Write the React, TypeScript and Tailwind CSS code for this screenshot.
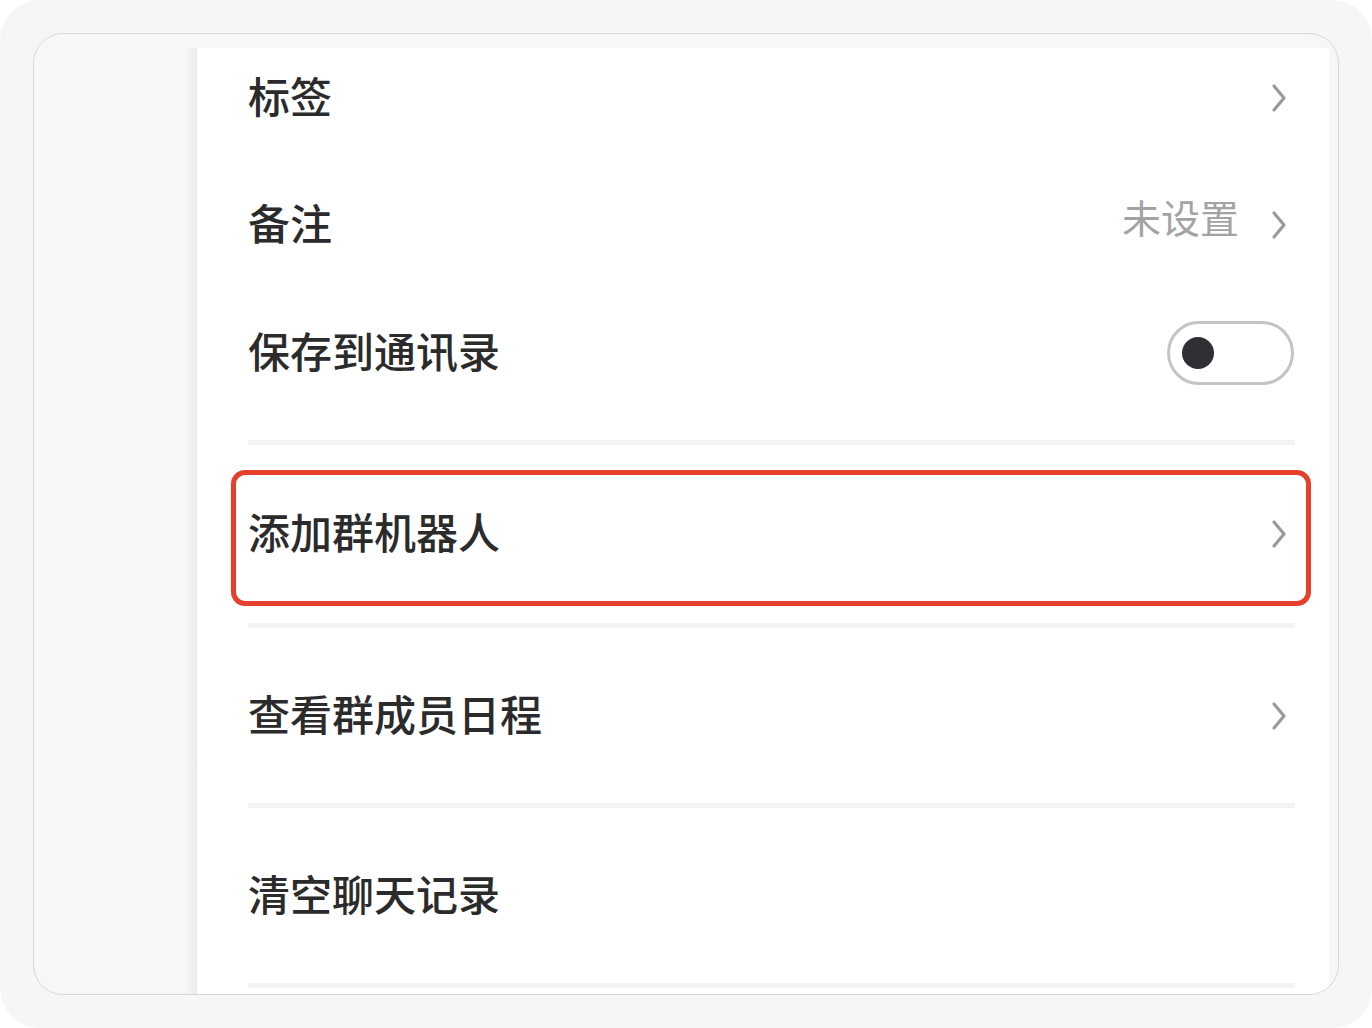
import React from "react";

const font = { fontFamily: '"Noto Sans CJK SC", "Noto Sans", sans-serif' };

function Chevron({ className = "" }: { className?: string }) {
  return (
    <svg width="20" height="32" viewBox="0 0 20 32" className={className} fill="none">
      <path d="M5 4 L15 16 L5 28" stroke="#9a9a9a" strokeWidth="3.2" strokeLinecap="round" strokeLinejoin="round" />
    </svg>
  );
}

function Divider() {
  return <div className="h-[5px] w-full bg-[#f2f3f4]" />;
}

export default function App() {
  return (
    <div className="w-[1372px] h-[1028px] bg-white" style={font}>
      <div className="w-full h-full rounded-[40px] bg-[#f5f6f8] p-[33px]">
        <div className="w-full h-full rounded-[30px] border border-[#d6d7d9] bg-[#f6f7f9] overflow-hidden flex">
          <div className="w-[150px] shrink-0" />
          <div className="w-[13px] shrink-0 mt-[14px] bg-gradient-to-r from-[#f6f7f9] to-[#e9eaec]" />
          <div className="flex-1 mt-[14px] mr-[9px] bg-white pl-[51px] pr-[34px] text-[42px] font-medium leading-none text-[#2b2b2b] flex flex-col">
            <div className="h-[100px] flex items-center justify-between">
              <span className="mb-[6px]">标签</span>
              <Chevron className="mr-[6px]" />
            </div>
            <div className="h-[154px] flex items-center justify-between">
              <span className="mb-[6px]">备注</span>
              <div className="flex items-center">
                <span className="text-[39px] font-normal text-[#a3a3a3] mb-[18px] mr-[30px]">未设置</span>
                <Chevron className="mr-[6px]" />
              </div>
            </div>
            <div className="h-[102px] flex items-center justify-between">
              <span className="mb-[6px]">保存到通讯录</span>
              <div className="w-[127px] h-[64px] mr-[1px] rounded-full border-[3px] border-[#c4c4c4] flex items-center pl-[12px]">
                <div className="w-[32px] h-[32px] rounded-full bg-[#2f3033]" />
              </div>
            </div>
            <div className="h-[36px]" />
            <Divider />
            <div className="h-[178px] relative flex items-center justify-between">
              <span className="mb-[6px]">添加群机器人</span>
              <Chevron className="mr-[6px]" />
              <div className="absolute left-[-17px] right-[-16px] top-[25px] h-[136px] rounded-[14px] border-[5px] border-[#e4402b]" />
            </div>
            <Divider />
            <div className="h-[175px] flex items-center justify-between">
              <span className="mb-[6px]">查看群成员日程</span>
              <Chevron className="mr-[6px]" />
            </div>
            <Divider />
            <div className="h-[175px] flex items-center justify-between">
              <span className="mb-[6px]">清空聊天记录</span>
            </div>
            <Divider />
          </div>
        </div>
      </div>
    </div>
  );
}
